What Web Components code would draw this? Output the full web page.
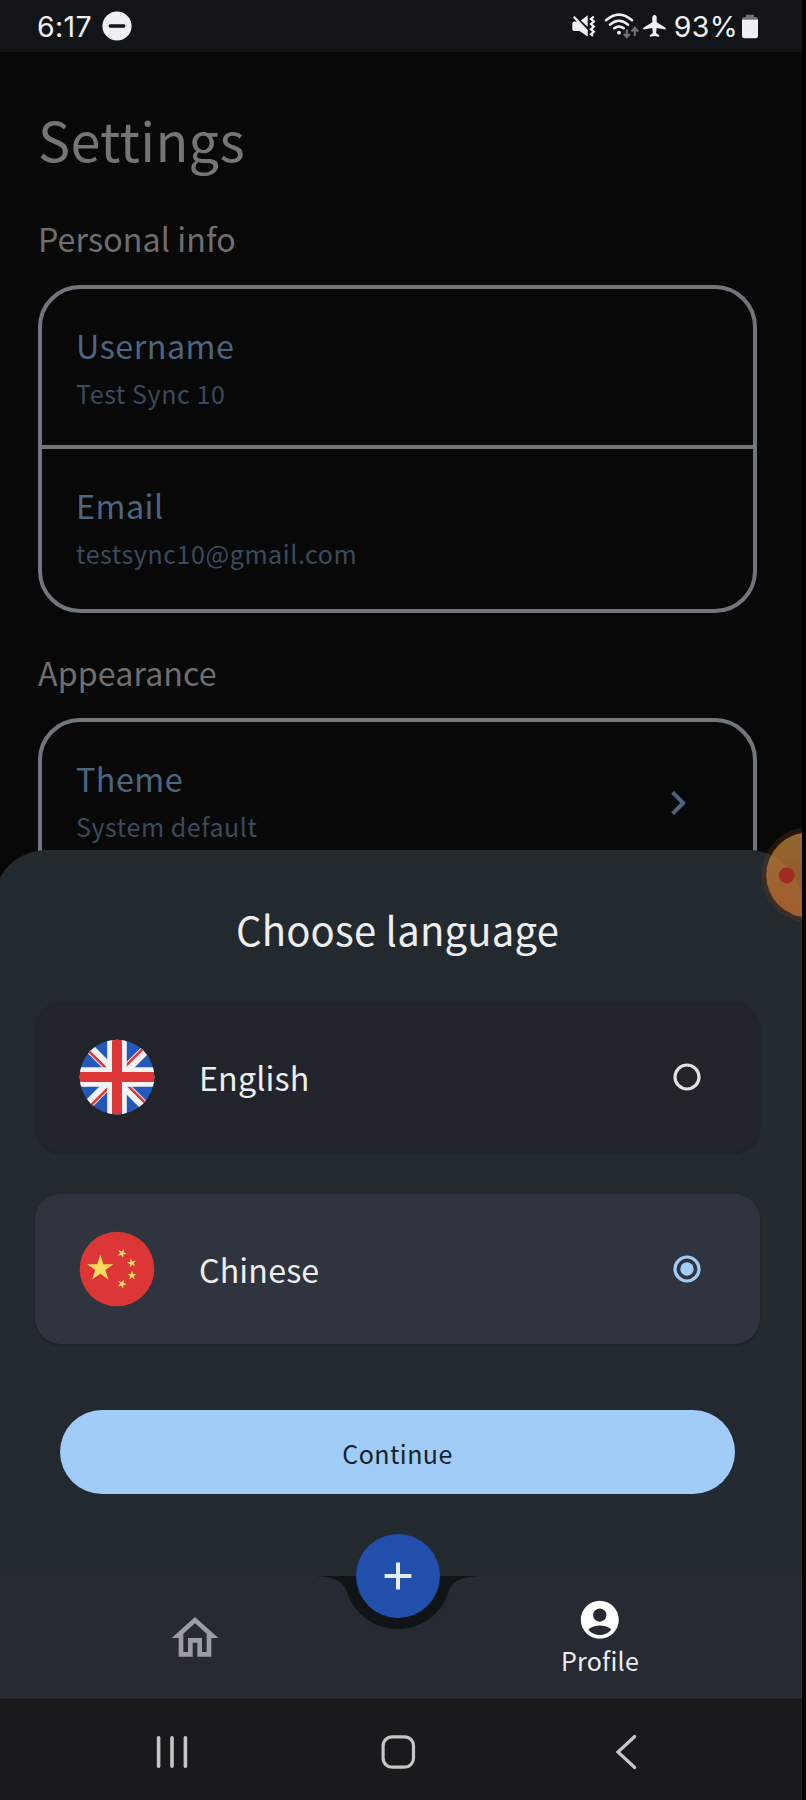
<!DOCTYPE html>
<html lang="en">
<head>
<meta charset="utf-8">
<title>Settings</title>
<style>
html,body{margin:0;background:#000;font-family:"Noto Sans CJK SC","Noto Sans",sans-serif}
</style>
</head>
<body>
<phone-screen>
  <status-bar></status-bar>
  <settings-page>
    <settings-group heading="Personal info">
      <settings-row label="Username" value="Test Sync 10"></settings-row>
      <settings-row label="Email" value="testsync10@gmail.com"></settings-row>
    </settings-group>
    <settings-group heading="Appearance">
      <settings-row label="Theme" value="System default" chevron></settings-row>
    </settings-group>
  </settings-page>
  <bottom-sheet heading="Choose language">
    <language-option label="English"><flag-uk></flag-uk></language-option>
    <language-option label="Chinese" selected><flag-cn></flag-cn></language-option>
    <pill-button slot="action">Continue</pill-button>
  </bottom-sheet>
  <app-nav></app-nav>
  <system-nav></system-nav>
  <recorder-bubble slot="overlay"></recorder-bubble>
</phone-screen>
<script>
function define(name, render){
  customElements.define(name, class extends HTMLElement{
    constructor(){
      super();
      this.attachShadow({mode:'open'});
    }
    connectedCallback(){
      const t=document.createElement('template');
      t.innerHTML=render(this);
      this.shadowRoot.replaceChildren(t.content.cloneNode(true));
    }
  });
}

define('phone-screen',()=>`<style>
:host{display:flex;flex-direction:column;width:802px;height:1800px;overflow:hidden;position:relative;background:#080808}
</style><slot></slot><slot name="overlay"></slot>`);

define('status-bar',()=>`<style>
:host{display:flex;align-items:center;justify-content:space-between;flex:none;height:52px;box-sizing:border-box;padding:0 44px 0 37px;background:#111517;color:#f0f0f2;font:28.500px/53px Inter,sans-serif;letter-spacing:.300px}
div{display:flex;align-items:center}
svg{display:block;flex:none}
</style>
<div><span>6:17</span>
<svg width="30" height="30" viewBox="-15 -15 30 30" style="margin-left:10.500px"><circle r="14.600" fill="#f0f0f2"/><path d="M-6.600 0H6.600" stroke="#111517" stroke-width="3.600" stroke-linecap="round"/></svg></div>
<div>
<svg width="25" height="26" viewBox="571 13 25 26"><path fill="#f0f0f2" d="M572.300 23.500q0-2 2-2h3.700L587.700 31v5.600L579.500 31h-5.200q-2 0-2-2zM580.800 20.500l6.900-5.200V26.800z"/><path d="M574.300 17.300L586.700 30.500" stroke="#f0f0f2" stroke-width="2.200" stroke-linecap="round"/><path d="M593.800 16.500l-2.800 2.500 2.800 2.500-2.800 2.500 2.800 2.600-2.800 2.600 2.800 2.600-2.800 2.400 2 1.600" fill="none" stroke="#f0f0f2" stroke-width="2.300"/></svg>
<svg width="37" height="28" viewBox="603 12 37 28" style="margin-left:7px"><g fill="none" stroke="#f0f0f2" stroke-width="2.500" stroke-linecap="round"><path d="M606 20.300Q619 9 632 20.300M610 24.600Q619 16.800 628 24.600M614.300 28.300Q619 24.600 623.700 28.300"/></g><circle cx="619" cy="32.700" r="1.900" fill="#f0f0f2"/><path d="M626.800 29.500V37M623.800 34l3 3.200 3-3.200M634.800 36V28.500M631.500 31.500l3.300-3.400 3.400 3.400" fill="none" stroke="#707376" stroke-width="2.200"/></svg>
<svg width="25" height="26" viewBox="642.500 13 25 26" style="margin-left:2px"><path fill="#f0f0f2" d="M655 15c1.600 0 2.200 1.400 2.200 3v4.200l8.500 5.200q.9.700.6 2l-9.100-1.400-.6 5 3.100 2.300v1.500l-4.700-.8-4.700.8v-1.500l3.100-2.300-.6-5-9.100 1.400q-.3-1.300.6-2l8.500-5.200V18c0-1.600.6-3 2.200-3z"/></svg>
<span style="margin-left:7px">93%</span>
<svg width="16" height="25" viewBox="742 14 16 25" style="margin-left:4px"><path fill="#707376" d="M746 14.700h8v2.300h2q2 0 2 2.500h-16q0-2.500 2-2.500h2z"/><path fill="#f0f0f2" d="M742 19.500h16V36q0 2.200-2.200 2.200h-11.600q-2.200 0-2.200-2.200z"/></svg>
</div>`);

define('settings-page',()=>`<style>
:host{display:block;flex:none;height:800px;box-sizing:border-box;padding:47px 45px 0 38px;overflow:hidden}
h1{margin:0 0 3px;font-size:54px;font-weight:400;line-height:80px;letter-spacing:.300px;color:#757575}
</style><h1>Settings</h1><slot></slot>`);

define('settings-group',e=>`<style>
:host{display:block;padding-bottom:38px}
h2{box-sizing:border-box;height:67px;margin:0;padding-top:1px;font-size:32.200px;font-weight:400;line-height:41px;letter-spacing:.100px;color:#6f6f6f}
:host(:first-of-type) h2{height:103px;padding-top:36px}
.box{box-sizing:border-box;min-height:200px;border:4px solid #70767c;border-radius:42px;overflow:hidden}
</style><h2>${e.getAttribute('heading')}</h2><div class="box"><slot></slot></div>`);

define('settings-row',e=>`<style>
:host{display:flex;align-items:center;justify-content:space-between;height:156px;box-sizing:border-box;padding:0 51px 0 34px}
:host(:not(:first-of-type)){border-top:4px solid #70767c;height:164px;padding-bottom:5px}
svg{position:relative;top:3px}
.l{font-size:32.300px;line-height:48px;letter-spacing:.500px;color:#4d6680}
.v{font-size:25px;line-height:42px;letter-spacing:.580px;color:#3b4a5c;margin-top:3px;margin-bottom:-1px}
</style><div><div class="l">${e.getAttribute('label')}</div><div class="v">${e.getAttribute('value')}</div></div>
${e.hasAttribute('chevron')?'<svg width="48" height="48" viewBox="0 0 24 24"><path fill="#4d6680" d="M10 6L8.590 7.410 13.170 12l-4.580 4.590L10 18l6-6z"/></svg>':''}`);

define('bottom-sheet',e=>`<style>
:host{display:flex;flex-direction:column;flex:none;position:relative;width:809px;height:726px;margin:-2px 0 0 -7px;box-sizing:border-box;padding:0 42px;border-radius:54px 54px 0 0;background:#22292f}
h2{margin:0;padding-top:47px;height:152px;box-sizing:border-box;text-align:center;font-size:40px;font-weight:400;line-height:64px;letter-spacing:.220px;color:#eee}
.list{display:flex;flex-direction:column;gap:42px}
.action{padding:66px 25px 0}
</style><h2>${e.getAttribute('heading')}</h2><div class="list"><slot></slot></div><div class="action"><slot name="action"></slot></div>`);

define('language-option',e=>{
  const on=e.hasAttribute('selected'), c=on?'#a0ccf7':'#e2e2e2';
  return `<style>
:host{display:flex;align-items:center;height:150px;box-sizing:border-box;padding:0 58px 0 44px;border-radius:26px;background:#21242b;box-shadow:0 2px 2px rgba(0,0,0,.18);font-size:32.200px;letter-spacing:.150px;color:#eee}
:host([selected]){background:#30343e}
span{flex:1;margin-left:44px;line-height:48px}
svg{display:block}
</style><slot></slot><span>${e.getAttribute('label')}</span>
<svg width="30" height="30" viewBox="-15 -15 30 30"><circle r="12" fill="none" stroke="${c}" stroke-width="3.200"/>${on?`<circle r="6.700" fill="${c}"/>`:''}</svg>`});

const arm=a=>`<g transform="rotate(${a})"><path fill="#f3f3f5" d="M-40-5.700H0V3.800H-40z"/><path fill="#dc3637" d="M-40 .300H-13V2.900H-40z"/></g>`;
define('flag-uk',()=>`<style>:host,svg{display:block}</style>
<svg width="76" height="76" viewBox="-38 -38 76 76"><clipPath id="c"><circle r="37.300"/></clipPath><g clip-path="url(#c)"><path fill="#2459b8" d="M-38-38h76v76h-76z"/>${[45,135,225,315].map(arm).join('')}<path d="M0-38V38M-38 0H38" stroke="#f3f3f5" stroke-width="19.600"/><path d="M0-38V38M-38 0H38" stroke="#dc3637" stroke-width="10"/></g></svg>`);

const star=(x,y,r,a)=>`<path transform="translate(${x} ${y}) rotate(${a}) scale(${r})" fill="#fadb60" d="M0-1L.2245-.309H.951L.363.118.588.809 0 .382-.588.809-.363.118-.951-.309H-.2245z"/>`;
define('flag-cn',()=>`<style>:host,svg{display:block}</style>
<svg width="76" height="76" viewBox="-38 -38 76 76"><circle r="37.300" fill="#dc3637"/>${star(-16.7,-.6,13.8,0)}${star(5,-15.7,4.900,24)}${star(14.700,-6,4.900,-12)}${star(15,6.500,4.900,0)}${star(5,15,4.900,22)}</svg>`);

define('pill-button',()=>`<style>
:host{display:flex;align-items:center;justify-content:center;height:84px;box-sizing:border-box;padding-top:2px;border-radius:43px;background:#a0ccf7;color:#15212d;font-size:25px;letter-spacing:.450px}
</style><slot></slot>`);

define('app-nav',()=>`<style>
:host{display:block;flex:none;position:relative;height:123px;background:#101416}
.shape{position:absolute;inset:0;display:block}
.items{position:relative;display:grid;grid-template-columns:390px 420px;height:100%}
.item{display:flex;flex-direction:column;align-items:center;justify-content:center}
.item svg{display:block}
.p{color:#eee;font-size:25px;line-height:36px;letter-spacing:.250px}
.fab{position:absolute;left:355.500px;top:-42.300px;width:84px;height:84px;border-radius:50%;background:#214fab;display:flex;align-items:center;justify-content:center}
</style>
<svg class="shape" width="802" height="123"><path fill="#262a33" d="M0 0H312C330 .500 343 3 347 16A53.200 53.200 0 0 0 448.500 16C452.500 3 465 .500 484 0H802V123H0z"/></svg>
<div class="items">
<div class="item"><svg width="56" height="56" viewBox="0 0 24 24"><path fill="#9b9da2" d="M12 5.690l5 4.500V18h-2v-6H9v6H7v-7.810l5-4.500M12 3L2 12h3v8h6v-6h2v6h6v-8h3L12 3z"/></svg></div>
<div class="item p"><svg width="45.600" height="45.600" viewBox="0 0 24 24"><path fill="#fff" d="M12 2C6.480 2 2 6.480 2 12s4.480 10 10 10 10-4.480 10-10S17.520 2 12 2zm0 4c1.930 0 3.500 1.570 3.500 3.500S13.930 13 12 13s-3.500-1.570-3.500-3.500S10.070 6 12 6zm0 14c-2.030 0-4.430-.820-6.140-2.880C7.550 15.800 9.680 15 12 15s4.450.800 6.140 2.120C16.430 19.180 14.030 20 12 20z"/></svg><span>Profile</span></div>
</div>
<div class="fab"><svg width="30" height="30" viewBox="-15 -15 30 30"><path d="M0-13.400V13.400M-13.400 0H13.400" stroke="#e3ecfc" stroke-width="4"/></svg></div>`);

define('system-nav',()=>`<style>
:host{display:grid;grid-template-columns:284px 168px 287px;align-items:center;justify-items:center;flex:none;height:101px;box-sizing:border-box;padding:5px 0 0 30px;background:#191a1b;box-shadow:inset 0 1px #111214}
svg{display:block}
</style>
<svg width="36" height="36" viewBox="-18 -18 36 36"><path d="M-13.400-14.200V14.200M0-14.200V14.200M13.400-14.200V14.200" stroke="#c6c6c6" stroke-width="3.600" stroke-linecap="round"/></svg>
<svg width="36" height="36" viewBox="-18 -18 36 36"><rect x="-14.900" y="-15.200" width="30.400" height="30.400" rx="9" fill="none" stroke="#c6c6c6" stroke-width="3.200"/></svg>
<svg width="36" height="36" viewBox="-18 -18 36 36"><path d="M8.700-15.500L-8 0 8.700 15.500" fill="none" stroke="#c6c6c6" stroke-width="3.200" stroke-linecap="round"/></svg>`);

define('recorder-bubble',()=>`<style>
:host{position:absolute;left:760px;top:827px;width:42px;height:96px;overflow:hidden}
svg{display:block}
</style><svg width="42" height="96" viewBox="760 827 42 96"><defs><linearGradient id="g" x1="0" y1="0" x2="0" y2="1"><stop offset="0" stop-color="#93682f"/><stop offset=".5" stop-color="#925c2b"/><stop offset="1" stop-color="#975225"/></linearGradient></defs>
<circle cx="808.700" cy="875" r="47.500" fill="#7a3a12" fill-opacity=".25"/><circle cx="808.700" cy="875" r="42.500" fill="url(#g)"/>
<clipPath id="k"><circle cx="808.700" cy="875" r="42.500"/></clipPath><path clip-path="url(#k)" d="M748 850A54 54 0 0 1 802 904V920H748z" fill="#d0905a" fill-opacity=".18"/>
<circle cx="786.700" cy="875.500" r="7.900" fill="#9f2c20"/></svg>`);
</script>
</body>
</html>
